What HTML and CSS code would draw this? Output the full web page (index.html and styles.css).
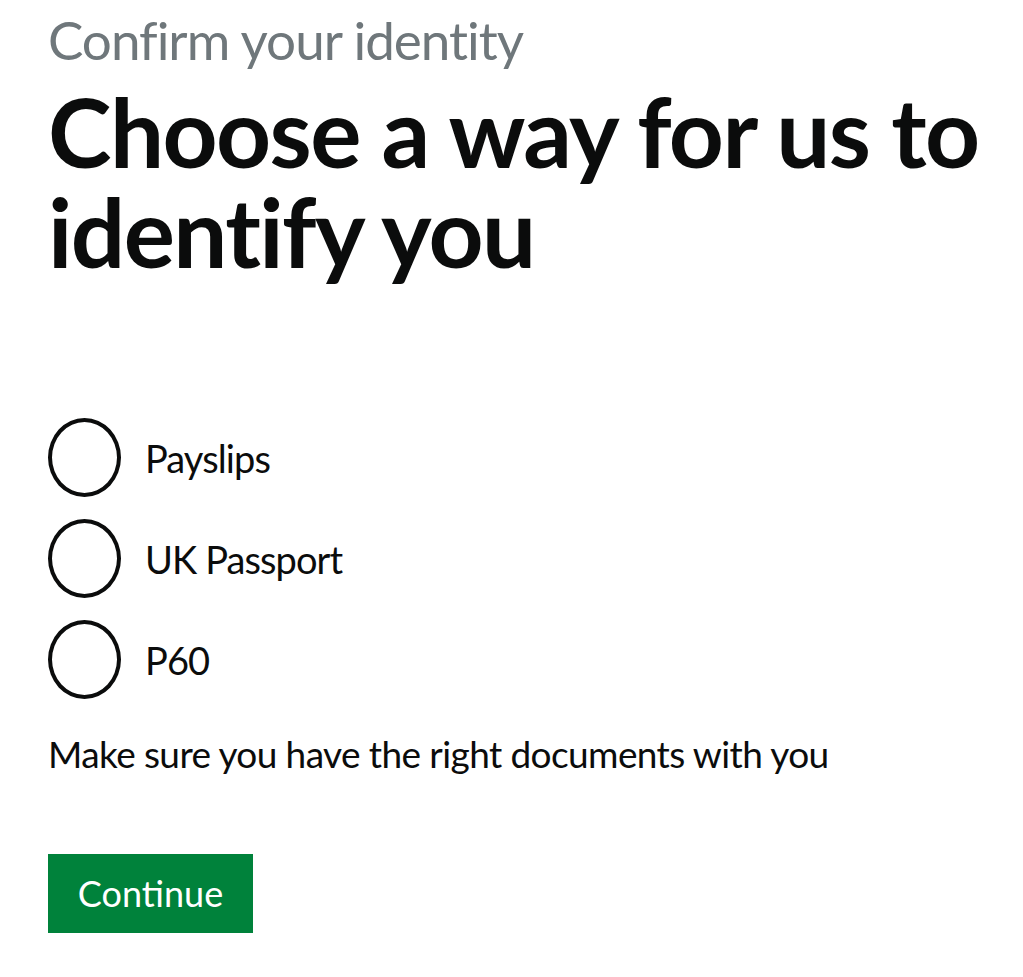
FILE: index.html
```html
<!DOCTYPE html>
<html lang="en">
<head>
<meta charset="utf-8">
<title>Choose a way for us to identify you</title>
<link rel="stylesheet" href="styles.css">
</head>
<body>
<main class="page">
  <span class="caption">Confirm your identity</span>
  <h1 class="heading">Choose a way for us to identify you</h1>
  <form class="form">
    <div class="radios">
      <label class="radio"><input type="radio" name="way" value="payslips"><span class="radio-mark"></span><span class="radio-label">Payslips</span></label>
      <label class="radio"><input type="radio" name="way" value="passport"><span class="radio-mark"></span><span class="radio-label">UK Passport</span></label>
      <label class="radio"><input type="radio" name="way" value="p60"><span class="radio-mark"></span><span class="radio-label">P60</span></label>
    </div>
    <p class="hint">Make sure you have the right documents with you</p>
    <button type="button" class="button">Continue</button>
  </form>
</main>
</body>
</html>
```
FILE: styles.css
```css
html, body {
  margin: 0;
  padding: 0;
  background: #ffffff;
}
.page {
  padding: 12px 0 0 48px;
  font-family: Lato, "Open Sans", sans-serif;
  color: #0b0c0c;
}
.caption {
  display: block;
  font-size: 53px;
  line-height: 56px;
  letter-spacing: -1px;
  color: #6f777b;
  font-weight: 400;
}
.heading {
  margin: 13px 0 0 0;
  font-size: 96px;
  line-height: 100px;
  letter-spacing: -1.6px;
  font-weight: 700;
  max-width: 965px;
}
.form {
  margin-top: 137px;
}
.radios {
  display: flex;
  flex-direction: column;
  gap: 22px;
}
.radio {
  display: flex;
  align-items: center;
  gap: 24px;
  cursor: pointer;
}
.radio input {
  position: absolute;
  opacity: 0;
  width: 0;
  height: 0;
}
.radio-mark {
  width: 65px;
  height: 71px;
  border: 4px solid #0b0c0c;
  border-radius: 50%;
  flex: none;
}
.radio-label {
  font-size: 38px;
  line-height: 1;
  letter-spacing: -0.9px;
}
.hint {
  margin: 36px 0 0 0;
  font-size: 37px;
  line-height: 37px;
  letter-spacing: -0.6px;
}
.button {
  display: block;
  margin-top: 82px;
  width: 205px;
  height: 79px;
  background: #00823b;
  color: #ffffff;
  border: 0;
  border-radius: 0;
  box-shadow: 0 4px 0 #002d18;
  font-family: Lato, "Open Sans", sans-serif;
  font-size: 36px;
  padding: 0 0 2px 0;
  cursor: pointer;
}
```
